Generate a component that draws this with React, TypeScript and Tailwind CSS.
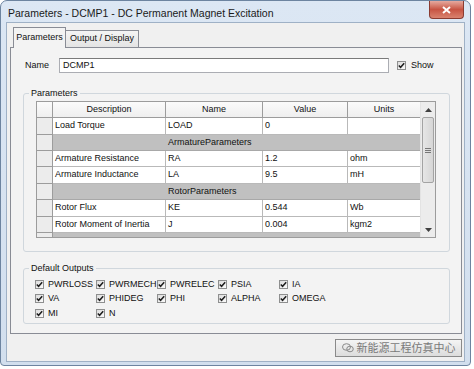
import React from "react";

type Row =
  | { kind: "data"; desc: string; name: string; value: string; units: string; h: string }
  | { kind: "section"; label: string; h: string };

const rows: Row[] = [
  { kind: "data", desc: "Load Torque", name: "LOAD", value: "0", units: "", h: "h-[17px]" },
  { kind: "section", label: "ArmatureParameters", h: "h-[16px]" },
  { kind: "data", desc: "Armature Resistance", name: "RA", value: "1.2", units: "ohm", h: "h-[16px]" },
  { kind: "data", desc: "Armature Inductance", name: "LA", value: "9.5", units: "mH", h: "h-[17px]" },
  { kind: "section", label: "RotorParameters", h: "h-[16px]" },
  { kind: "data", desc: "Rotor Flux", name: "KE", value: "0.544", units: "Wb", h: "h-[17px]" },
  { kind: "data", desc: "Rotor Moment of Inertia", name: "J", value: "0.004", units: "kgm2", h: "h-[16px]" },
];

const outputs = [
  "PWRLOSS", "PWRMECH", "PWRELEC", "PSIA", "IA",
  "VA", "PHIDEG", "PHI", "ALPHA", "OMEGA",
  "MI", "N",
];

function Check() {
  return (
    <span className="flex h-[9px] w-[9px] shrink-0 items-center justify-center border border-[#8e8f8f] bg-gradient-to-br from-[#dcdcdc] to-[#fbfbfb]">
      <svg width="7" height="7" viewBox="0 0 7 7">
        <path d="M0.8 3.4 L2.6 5.3 L6.2 1.2" fill="none" stroke="#1e1e1e" strokeWidth="1.5" />
      </svg>
    </span>
  );
}

function Cell({ w, children, last }: { w: string; children?: React.ReactNode; last?: boolean }) {
  return (
    <div className={`${w} flex h-full items-center overflow-hidden whitespace-nowrap border-b border-[#b9b9b9] bg-white pl-[2px] ${last ? "" : "border-r"}`}>
      {children}
    </div>
  );
}

function ParamTable() {
  return (
    <div className="flex h-[137px] w-[400px] border border-[#9c9c9c] bg-white">
      <div className="flex w-[383px] flex-col">
        {/* header */}
        <div className="flex h-[16px] shrink-0 bg-gradient-to-b from-[#fbfbfb] to-[#eeeeee]">
          <div className="h-full w-[16px] border-b border-r border-[#9c9c9c]" />
          <div className="flex h-full w-[113px] items-center justify-center border-b border-r border-[#9c9c9c]">Description</div>
          <div className="flex h-full w-[97px] items-center justify-center border-b border-r border-[#9c9c9c]">Name</div>
          <div className="flex h-full w-[85px] items-center justify-center border-b border-r border-[#9c9c9c]">Value</div>
          <div className="flex h-full w-[72px] items-center justify-center border-b border-[#9c9c9c]">Units</div>
        </div>
        {rows.map((r, i) => (
          <div key={i} className={`flex shrink-0 ${r.h}`}>
            <div className="h-full w-[16px] border-b border-r border-[#9c9c9c] bg-[#ececec]" />
            {r.kind === "data" ? (
              <>
                <Cell w="w-[113px]">{r.desc}</Cell>
                <Cell w="w-[97px]">{r.name}</Cell>
                <Cell w="w-[85px]">{r.value}</Cell>
                <Cell w="w-[72px]" last>{r.units}</Cell>
              </>
            ) : (
              <div className="flex h-full flex-1 items-center border-b border-[#a8a8a8] bg-[#c0c0c0] pl-[115px]">
                {r.label}
              </div>
            )}
          </div>
        ))}
        <div className="flex flex-1">
          <div className="h-full w-[16px] border-r border-[#9c9c9c] bg-[#ececec]" />
          <div className="h-full flex-1 bg-[#c0c0c0]" />
        </div>
      </div>
      {/* scrollbar */}
      <div className="flex w-[15px] flex-col border-l border-[#e3e3e3] bg-[#ececec]">
        <div className="flex h-[15px] items-center justify-center">
          <svg width="7" height="4" viewBox="0 0 7 4">
            <path d="M0 4 L3.5 0 L7 4 Z" fill="#404040" />
          </svg>
        </div>
        <div className="mx-[1px] flex h-[66px] items-center justify-center rounded-[2px] border border-[#a3a3a3] bg-gradient-to-r from-[#e6e6e6] to-[#d6d6d6]">
          <svg width="6" height="5" viewBox="0 0 6 5">
            <path d="M0 0.5 H6 M0 2.5 H6 M0 4.5 H6" stroke="#777" strokeWidth="1" />
          </svg>
        </div>
        <div className="flex-1" />
        <div className="flex h-[14px] items-center justify-center">
          <svg width="7" height="4" viewBox="0 0 7 4">
            <path d="M0 0 L3.5 4 L7 0 Z" fill="#404040" />
          </svg>
        </div>
      </div>
    </div>
  );
}

export default function App() {
  return (
    <div
      className="h-[369px] w-[474px] overflow-hidden bg-white text-[9px] text-[#111]"
      style={{ fontFamily: '"Liberation Sans", Arial, "Noto Sans CJK SC", sans-serif' }}
    >
      <div className="flex h-[366px] w-[471px] flex-col rounded-t-[7px] rounded-b-[4px] border border-[#6d84a0] bg-gradient-to-b from-[#dce7f4] to-[#d2dfee] px-[5px] pb-[3px]">
        {/* title bar */}
        <div className="flex h-[21px] shrink-0 items-start">
          <span className="pl-[2px] pt-[5px] text-[10.5px] text-[#1a1a1a]">
            Parameters - DCMP1 - DC Permanent Magnet Excitation
          </span>
          <div className="ml-auto mr-[1px] flex h-[18px] w-[35px] items-center justify-center rounded-b-[4px] border border-t-0 border-[#8a3b31] bg-gradient-to-b from-[#e5a99f] via-[#c75443] to-[#d9826f]">
            <svg width="9" height="8" viewBox="0 0 9 8">
              <path d="M1 1 L8 7 M8 1 L1 7" stroke="#fff" strokeWidth="2" />
            </svg>
          </div>
        </div>

        {/* client area */}
        <div className="flex flex-1 flex-col border border-[#9fb1c6] bg-[#f0f0f0] pl-[3px] pr-[2px] pb-[4px]">
          {/* tabs */}
          <div className="flex h-[24px] shrink-0 items-end pl-[3px]">
            <div className="relative z-10 -mb-px flex h-[21px] w-[53px] items-center justify-center border border-b-0 border-[#898c95] bg-[#f3f3f3]">
              Parameters
            </div>
            <div className="flex h-[17px] w-[73px] items-center justify-center border border-b-0 border-l-0 border-[#898c95] bg-gradient-to-b from-[#f4f4f4] to-[#e4e4e4]">
              Output / Display
            </div>
          </div>

          {/* tab panel */}
          <div className="flex h-[287px] shrink-0 flex-col border border-[#898c95] bg-[#f3f3f3] pl-[12px] pr-[11px]">
            <div className="mt-[10px] flex h-[15px] items-center">
              <span className="w-[36px] pl-[2px]">Name</span>
              <div className="flex h-[15px] w-[330px] items-center border border-[#abadb3] border-t-[#7a7a7a] bg-white pl-[3px]">
                DCMP1
              </div>
              <div className="ml-[8px] flex items-center gap-[5px]">
                <Check />
                <span>Show</span>
              </div>
            </div>

            <fieldset className="mt-[15px] rounded-[3px] border border-[#d0d7dd] px-[12px] pb-[13px] pt-[2px]">
              <legend className="-ml-[7px] px-[2px] leading-[11px]">Parameters</legend>
              <ParamTable />
            </fieldset>

            <fieldset className="mt-[11px] rounded-[3px] border border-[#d0d7dd] pb-[2px] pl-[11px] pt-[3px]">
              <legend className="-ml-[6px] px-[2px] leading-[11px]">Default Outputs</legend>
              <div className="grid grid-cols-[61px_61px_61px_61px_61px] auto-rows-[14.5px]">
                {outputs.map((o) => (
                  <div key={o} className="flex items-center gap-[4px] whitespace-nowrap">
                    <Check />
                    <span>{o}</span>
                  </div>
                ))}
              </div>
            </fieldset>
          </div>

          {/* bottom button */}
          <div className="mt-[5px] flex justify-end">
            <div className="flex h-[18px] w-[127px] items-center justify-center gap-[3px] border border-[#8a8a8a] bg-gradient-to-b from-[#f4f4f4] to-[#dcdcdc] text-[11px] text-[#7a7a7a]">
              <svg width="12" height="10" viewBox="0 0 12 10">
                <ellipse cx="4.5" cy="4" rx="4" ry="3.3" fill="none" stroke="#8a8a8a" strokeWidth="1" />
                <ellipse cx="8" cy="6" rx="3.3" ry="2.8" fill="none" stroke="#8a8a8a" strokeWidth="1" />
              </svg>
              <span>新能源工程仿真中心</span>
            </div>
          </div>
        </div>
      </div>
    </div>
  );
}
